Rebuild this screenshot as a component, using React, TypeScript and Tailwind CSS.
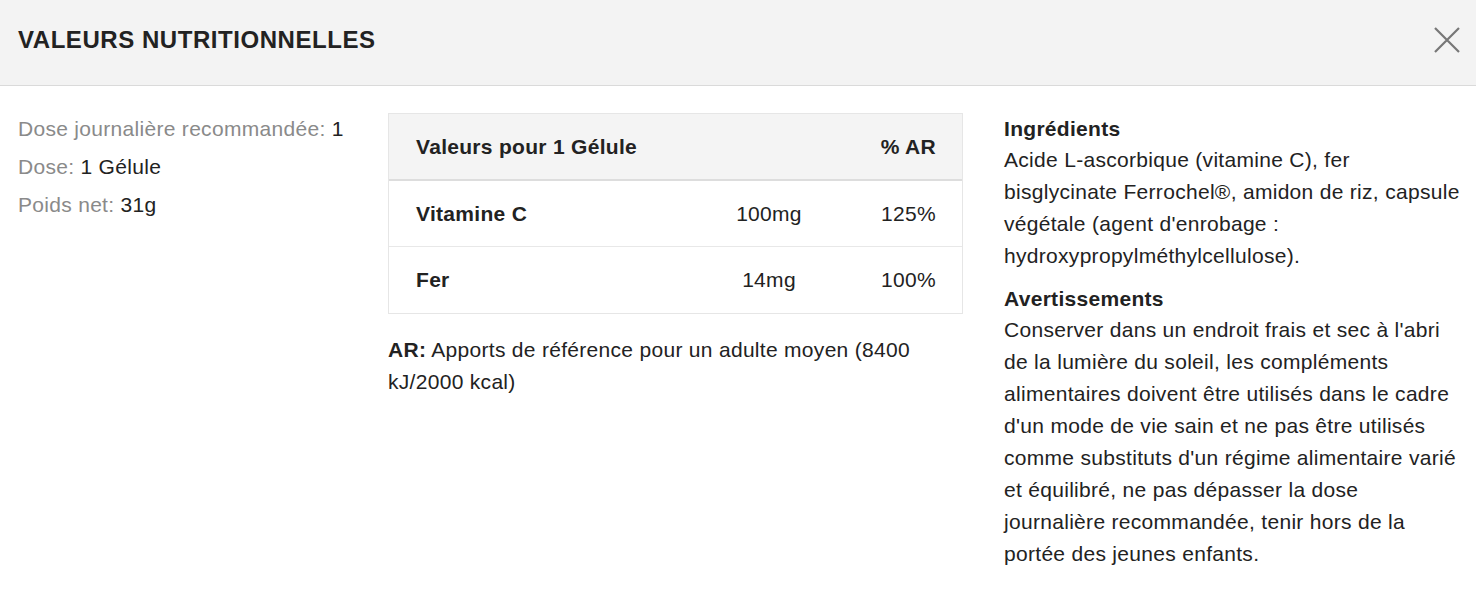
import React from 'react';

const rows = [
  { name: 'Vitamine C', amount: '100mg', pct: '125%' },
  { name: 'Fer', amount: '14mg', pct: '100%' },
];

export default function App() {
  return (
    <div className="min-h-[600px] bg-white text-[#222] font-['Liberation_Sans',Arial,sans-serif]">
      {/* en-tête */}
      <div className="flex h-[86px] items-center justify-between border-b border-[#dadada] bg-[#f3f3f3] pb-[5px] pl-[18px] pr-[16px]">
        <h1 className="text-[24px] font-bold leading-none tracking-[0.55px]">VALEURS NUTRITIONNELLES</h1>
        <button className="text-[#777]" aria-label="Fermer">
          <svg width="26" height="26" viewBox="0 0 26 26" fill="none" stroke="currentColor" strokeWidth="2.2">
            <path d="M1 1L25 25M25 1L1 25" />
          </svg>
        </button>
      </div>

      <div className="flex pl-[18px] pr-[14px] pt-[24px] text-[21px] tracking-[0.3px]">
        {/* infos dose */}
        <div className="w-[370px] shrink-0 leading-[38px]">
          <p><span className="text-[#8a8a8a]">Dose journalière recommandée:</span> 1</p>
          <p><span className="text-[#8a8a8a]">Dose:</span> 1 Gélule</p>
          <p><span className="text-[#8a8a8a]">Poids net:</span> 31g</p>
        </div>

        {/* tableau */}
        <div className="w-[575px] shrink-0 pt-[3px]">
          <div className="border border-[#e6e6e6]">
            <div className="grid h-[67px] grid-cols-[1fr_130px] items-center border-b-2 border-[#dddddd] bg-[#f4f4f4] font-bold">
              <span className="pl-[27px]">Valeurs pour 1 Gélule</span>
              <span className="pr-[26px] text-right">% AR</span>
            </div>
            {rows.map((r, i) => (
              <div
                key={r.name}
                className={`grid h-[66px] grid-cols-[1fr_126px_130px] items-center ${i === 0 ? 'border-b border-[#e8e8e8]' : ''}`}
              >
                <span className="pl-[27px] font-bold">{r.name}</span>
                <span className="text-center">{r.amount}</span>
                <span className="pr-[26px] text-right">{r.pct}</span>
              </div>
            ))}
          </div>
          <p className="mt-[20px] leading-[32px]">
            <b>AR:</b> Apports de référence pour un adulte moyen (8400 kJ/2000 kcal)
          </p>
        </div>

        {/* ingrédients */}
        <div className="ml-[41px] flex-1 pt-[4px]">
          <h2 className="font-bold leading-[30px]">Ingrédients</h2>
          <p className="leading-[32px]">
            Acide L-ascorbique (vitamine C), fer bisglycinate Ferrochel®, amidon de riz, capsule végétale (agent d'enrobage : hydroxypropylméthylcellulose).
          </p>
          <h2 className="mt-[12px] font-bold leading-[30px]">Avertissements</h2>
          <p className="leading-[32px]">
            Conserver dans un endroit frais et sec à l'abri de la lumière du soleil, les compléments alimentaires doivent être utilisés dans le cadre d'un mode de vie sain et ne pas être utilisés comme substituts d'un régime alimentaire varié et équilibré, ne pas dépasser la dose journalière recommandée, tenir hors de la portée des jeunes enfants.
          </p>
        </div>
      </div>
    </div>
  );
}
